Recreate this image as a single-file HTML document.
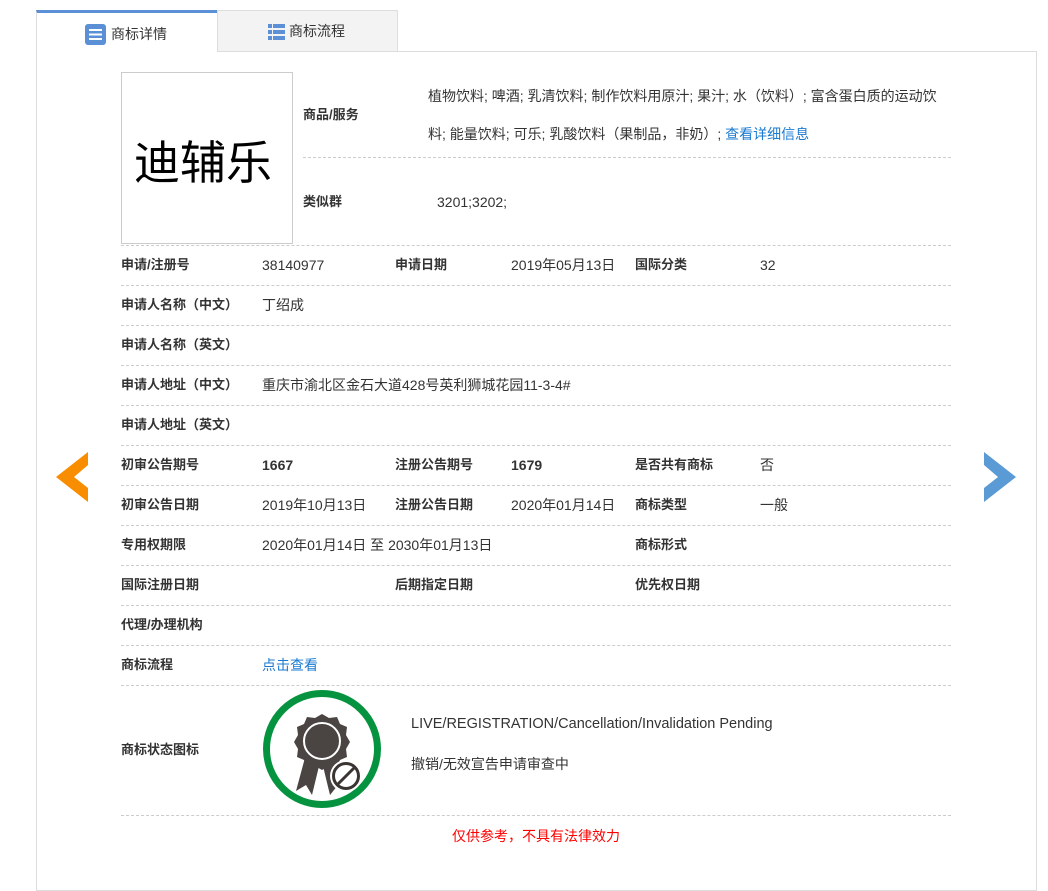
<!DOCTYPE html>
<html><head><meta charset="utf-8"><style>
*{margin:0;padding:0;box-sizing:border-box}
body{width:1048px;height:879px;background:#fff;font-family:"Liberation Sans","Noto Sans CJK SC",sans-serif;font-size:14px;color:#333;position:relative;overflow:hidden}
.a{position:absolute;white-space:nowrap;line-height:16px}
.b{font-weight:bold;font-size:13px}
.l{position:absolute;height:0;border-top:1px dashed #ccc}
.blue{color:#1a7ad0}
</style></head><body>
<div style="position:absolute;left:36px;top:51px;width:1001px;height:840px;border:1px solid #ddd"></div>
<div style="position:absolute;left:36px;top:10px;width:181px;height:42px;background:#fff;border-top:3px solid #5b8fd6;border-left:1px solid #ddd"></div>
<div style="position:absolute;left:217px;top:10px;width:181px;height:41px;background:#f3f3f3;border:1px solid #ddd;border-bottom:none"></div>
<svg class="a" style="left:85px;top:24px" width="21" height="21"><rect width="21" height="21" rx="3" fill="#5b8fd6"/><rect x="4" y="5" width="13" height="2" fill="#fff"/><rect x="4" y="9.5" width="13" height="2" fill="#fff"/><rect x="4" y="14" width="13" height="2" fill="#fff"/></svg>
<div class="a" style="left:111px;top:26px;font-size:14px">商标详情</div>
<svg class="a" style="left:268px;top:24px" width="17" height="16"><g fill="#5b8fd6"><rect x="0" y="0" width="4" height="4"/><rect x="5" y="0" width="12" height="4"/><rect x="0" y="6" width="4" height="4"/><rect x="5" y="6" width="12" height="4"/><rect x="0" y="12" width="4" height="4"/><rect x="5" y="12" width="12" height="4"/></g></svg>
<div class="a" style="left:289px;top:23px;font-size:14px">商标流程</div>

<div style="position:absolute;left:121px;top:72px;width:172px;height:172px;border:1px solid #ccc"></div>
<div class="a" style="left:134px;top:138px;font-size:46px;line-height:50px;color:#000">迪辅乐</div>
<div class="a b" style="left:303px;top:107px">商品/服务</div>
<div class="a" style="left:428px;top:88px">植物饮料; 啤酒; 乳清饮料; 制作饮料用原汁; 果汁; 水（饮料）; 富含蛋白质的运动饮</div>
<div class="a" style="left:428px;top:126px">料; 能量饮料; 可乐; 乳酸饮料（果制品，非奶）; <span class="blue">查看详细信息</span></div>
<div class="l" style="left:303px;top:157px;width:648px"></div>
<div class="a b" style="left:303px;top:194px">类似群</div>
<div class="a" style="left:437px;top:194px">3201;3202;</div>
<div class="l" style="left:121px;top:245px;width:830px"></div>

<div class="a b" style="left:121px;top:257px">申请/注册号</div><div class="a" style="left:262px;top:257px">38140977</div>
<div class="a b" style="left:395px;top:257px">申请日期</div><div class="a" style="left:511px;top:257px">2019年05月13日</div>
<div class="a b" style="left:635px;top:257px">国际分类</div><div class="a" style="left:760px;top:257px">32</div>
<div class="l" style="left:121px;top:285px;width:830px"></div>
<div class="a b" style="left:121px;top:297px">申请人名称（中文）</div><div class="a" style="left:262px;top:297px">丁绍成</div>
<div class="l" style="left:121px;top:325px;width:830px"></div>
<div class="a b" style="left:121px;top:337px">申请人名称（英文）</div>
<div class="l" style="left:121px;top:365px;width:830px"></div>
<div class="a b" style="left:121px;top:377px">申请人地址（中文）</div><div class="a" style="left:262px;top:377px">重庆市渝北区金石大道428号英利狮城花园11-3-4#</div>
<div class="l" style="left:121px;top:405px;width:830px"></div>
<div class="a b" style="left:121px;top:417px">申请人地址（英文）</div>
<div class="l" style="left:121px;top:445px;width:830px"></div>
<div class="a b" style="left:121px;top:457px">初审公告期号</div><div class="a" style="left:262px;top:457px;font-weight:bold">1667</div>
<div class="a b" style="left:395px;top:457px">注册公告期号</div><div class="a" style="left:511px;top:457px;font-weight:bold">1679</div>
<div class="a b" style="left:635px;top:457px">是否共有商标</div><div class="a" style="left:760px;top:457px">否</div>
<div class="l" style="left:121px;top:485px;width:830px"></div>
<div class="a b" style="left:121px;top:497px">初审公告日期</div><div class="a" style="left:262px;top:497px">2019年10月13日</div>
<div class="a b" style="left:395px;top:497px">注册公告日期</div><div class="a" style="left:511px;top:497px">2020年01月14日</div>
<div class="a b" style="left:635px;top:497px">商标类型</div><div class="a" style="left:760px;top:497px">一般</div>
<div class="l" style="left:121px;top:525px;width:830px"></div>
<div class="a b" style="left:121px;top:537px">专用权期限</div><div class="a" style="left:262px;top:537px">2020年01月14日 至 2030年01月13日</div>
<div class="a b" style="left:635px;top:537px">商标形式</div>
<div class="l" style="left:121px;top:565px;width:830px"></div>
<div class="a b" style="left:121px;top:577px">国际注册日期</div>
<div class="a b" style="left:395px;top:577px">后期指定日期</div>
<div class="a b" style="left:635px;top:577px">优先权日期</div>
<div class="l" style="left:121px;top:605px;width:830px"></div>
<div class="a b" style="left:121px;top:617px">代理/办理机构</div>
<div class="l" style="left:121px;top:645px;width:830px"></div>
<div class="a b" style="left:121px;top:657px">商标流程</div><div class="a blue" style="left:262px;top:657px">点击查看</div>
<div class="l" style="left:121px;top:685px;width:830px"></div>
<div class="a b" style="left:121px;top:742px">商标状态图标</div>
<svg class="a" style="left:260px;top:688px" width="124" height="124">
<circle cx="62" cy="61" r="55.5" fill="none" stroke="#069340" stroke-width="7"/>
<g fill="#4a4442">
<polygon points="46,66 36,103 46,97 52,107 60,74"/>
<polygon points="76,66 88,103 78,97 70,107 62,74"/>
<path d="M62,26 l7,4 8,-1 3,7 7,3 -1,8 4,7 -4,7 1,8 -7,3 -3,7 -8,-1 -7,4 -7,-4 -8,1 -3,-7 -7,-3 1,-8 -4,-7 4,-7 -1,-8 7,-3 3,-7 8,1z"/>
</g>
<circle cx="62" cy="53" r="18" fill="#4a4442" stroke="#fff" stroke-width="2"/>
<circle cx="86" cy="88" r="16" fill="#fff"/>
<circle cx="86" cy="88" r="12.5" fill="none" stroke="#3a3432" stroke-width="3"/>
<line x1="77" y1="97" x2="95" y2="79" stroke="#3a3432" stroke-width="3"/>
</svg>
<div class="a" style="left:411px;top:716px;font-size:14.5px">LIVE/REGISTRATION/Cancellation/Invalidation Pending</div>
<div class="a" style="left:411px;top:756px">撤销/无效宣告申请审查中</div>
<div class="l" style="left:121px;top:815px;width:830px"></div>
<div class="a" style="left:452px;top:828px;color:#f00">仅供参考，不具有法律效力</div>

<svg class="a" style="left:54px;top:450px" width="36" height="54"><polygon points="34,2 2,27 34,52 34,38 20,27 34,15" fill="#f98d00"/></svg>
<svg class="a" style="left:982px;top:450px" width="36" height="54"><polygon points="2,2 34,27 2,52 2,38 16,27 2,15" fill="#5b9bd5"/></svg>
</body></html>
